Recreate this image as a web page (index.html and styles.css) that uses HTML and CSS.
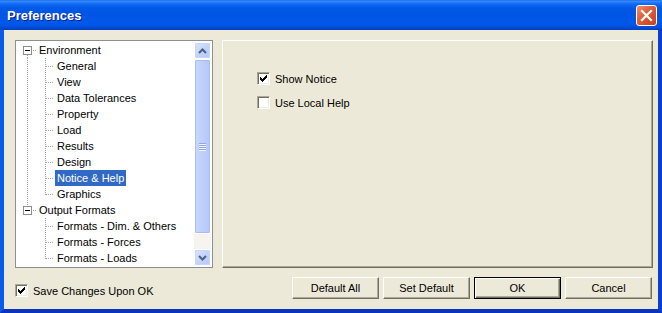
FILE: index.html
```html
<!DOCTYPE html>
<html>
<head>
<meta charset="utf-8">
<link rel="stylesheet" href="styles.css">
</head>
<body>
<div class="window">
  <div class="titlebar">
    <span class="title">Preferences</span>
    <span class="close"><svg width="13" height="13" viewBox="0 0 13 13"><path d="M2 2 L11 11 M11 2 L2 11" stroke="#fff" stroke-width="2.2" stroke-linecap="square"/></svg></span>
  </div>
  <div class="client">
    <div class="main">
      <div class="treebox">
        <div class="tree">
          <div class="row root first"><span class="exp"></span><span class="txt">Environment</span></div>
          <div class="group cont">
            <div class="row leaf"><span class="txt">General</span></div>
            <div class="row leaf"><span class="txt">View</span></div>
            <div class="row leaf"><span class="txt">Data Tolerances</span></div>
            <div class="row leaf"><span class="txt">Property</span></div>
            <div class="row leaf"><span class="txt">Load</span></div>
            <div class="row leaf"><span class="txt">Results</span></div>
            <div class="row leaf"><span class="txt">Design</span></div>
            <div class="row leaf"><span class="txt sel">Notice &amp; Help</span></div>
            <div class="row leaf last"><span class="txt">Graphics</span></div>
          </div>
          <div class="row root lastroot"><span class="exp"></span><span class="txt">Output Formats</span></div>
          <div class="group">
            <div class="row leaf"><span class="txt">Formats - Dim. &amp; Others</span></div>
            <div class="row leaf"><span class="txt">Formats - Forces</span></div>
            <div class="row leaf last"><span class="txt">Formats - Loads</span></div>
          </div>
        </div>
        <div class="scrollbar">
          <div class="sbtn"><svg width="9" height="6" viewBox="0 0 9 6"><path d="M1 5 L4.5 1.5 L8 5" fill="none" stroke="#4D6185" stroke-width="2"/></svg></div>
          <div class="thumb"><div class="grip"><i></i><i></i><i></i><i></i></div></div>
          <div class="track"></div>
          <div class="sbtn"><svg width="9" height="6" viewBox="0 0 9 6"><path d="M1 1 L4.5 4.5 L8 1" fill="none" stroke="#4D6185" stroke-width="2"/></svg></div>
        </div>
      </div>
      <div class="panel">
        <label class="check"><span class="box"><svg class="mark" width="7" height="7" viewBox="0 0 7 7" shape-rendering="crispEdges"><rect x="0" y="2" width="1" height="3"/><rect x="1" y="3" width="1" height="3"/><rect x="2" y="4" width="1" height="3"/><rect x="3" y="3" width="1" height="3"/><rect x="4" y="2" width="1" height="3"/><rect x="5" y="1" width="1" height="3"/><rect x="6" y="0" width="1" height="3"/></svg></span><span>Show Notice</span></label>
        <label class="check"><span class="box"></span><span>Use Local Help</span></label>
      </div>
    </div>
    <div class="footer">
      <label class="check save"><span class="box"><svg class="mark" width="7" height="7" viewBox="0 0 7 7" shape-rendering="crispEdges"><rect x="0" y="2" width="1" height="3"/><rect x="1" y="3" width="1" height="3"/><rect x="2" y="4" width="1" height="3"/><rect x="3" y="3" width="1" height="3"/><rect x="4" y="2" width="1" height="3"/><rect x="5" y="1" width="1" height="3"/><rect x="6" y="0" width="1" height="3"/></svg></span><span>Save Changes Upon OK</span></label>
      <div class="buttons">
        <div class="btn">Default All</div>
        <div class="btn">Set Default</div>
        <div class="btn default">OK</div>
        <div class="btn">Cancel</div>
      </div>
    </div>
  </div>
</div>
</body>
</html>
```
FILE: styles.css
```css
body {
  margin: 0;
  background: #ECE9D8;
}
.window {
  width: 662px;
  height: 313px;
  display: flex;
  flex-direction: column;
  font-family: "Liberation Sans", Arial, sans-serif;
  font-size: 11px;
  color: #000;
  overflow: hidden;
}
.titlebar {
  height: 30px;
  flex: none;
  display: flex;
  align-items: center;
  padding: 0 5px 0 7px;
  background: linear-gradient(to bottom,
    #0A5EE8 0px, #3D90FD 1px, #2C80FA 2px, #1268F2 4px, #0059E8 8px,
    #0055E3 14px, #0058EA 22px, #0054E2 26px, #0049D0 28px, #0040C0 30px);
}
.title {
  color: #fff;
  font-weight: bold;
  font-size: 13px;
  text-shadow: 1px 1px 0 #0A1E8C;
  flex: 1;
  margin-top: 1px;
}
.close {
  width: 19px;
  height: 19px;
  border: 1px solid #fff;
  border-radius: 3px;
  background: linear-gradient(135deg, #EE9073 0%, #E0603D 40%, #C8401C 100%);
  display: flex;
  align-items: center;
  justify-content: center;
  margin-top: 1px;
}
.client {
  flex: 1;
  background: #ECE9D8;
  border-left: 4px solid #0B5BEA;
  border-right: 4px solid #0A3FCC;
  border-bottom: 4px solid #0834BE;
  padding: 10px 5px 0 11px;
  display: flex;
  flex-direction: column;
}
.main {
  display: flex;
  gap: 9px;
  height: 228px;
  flex: none;
}
.treebox {
  width: 198px;
  box-sizing: border-box;
  border: 1px solid #8A8F9A;
  padding: 1px;
  background: #fff;
  display: flex;
}
.tree {
  flex: 1;
  overflow: hidden;
}
.row {
  height: 16px;
  display: flex;
  align-items: center;
  white-space: nowrap;
  background-repeat: no-repeat;
}
.txt {
  padding: 0 2px;
  line-height: 16px;
  height: 16px;
}
.txt.sel {
  background: #316AC5;
  color: #fff;
}
.root .txt {
  margin-left: 2px;
}
.exp {
  width: 7px;
  height: 7px;
  border: 1px solid #8D8D8D;
  background: #fff;
  margin-left: 6px;
  margin-right: 3px;
  display: flex;
  align-items: center;
  justify-content: center;
}
.exp::after {
  content: "";
  width: 5px;
  height: 1px;
  background: #000;
}
.root {
  background-image:
    repeating-linear-gradient(to right, #A0A0A0 0 1px, transparent 1px 2px),
    repeating-linear-gradient(to bottom, #A0A0A0 0 1px, transparent 1px 2px);
}
.root.first {
  background-size: 3px 1px, 1px 3px;
  background-position: 16px 8px, 10px 13px;
}
.root.lastroot {
  background-size: 3px 1px, 1px 4px;
  background-position: 16px 8px, 10px 0px;
}
.leaf {
  padding-left: 38px;
  background-image:
    repeating-linear-gradient(to bottom, #A0A0A0 0 1px, transparent 1px 2px),
    repeating-linear-gradient(to right, #A0A0A0 0 1px, transparent 1px 2px);
  background-size: 1px 16px, 8px 1px;
  background-position: 28px 0px, 29px 8px;
}
.leaf.last {
  background-size: 1px 9px, 8px 1px;
}
.group.cont {
  background-image: repeating-linear-gradient(to bottom, #A0A0A0 0 1px, transparent 1px 2px);
  background-size: 1px 100%;
  background-position: 10px 0;
  background-repeat: no-repeat;
}
.scrollbar {
  width: 17px;
  flex: none;
  display: flex;
  flex-direction: column;
  background: #F5F4EF;
}
.sbtn {
  height: 17px;
  box-sizing: border-box;
  border: 1px solid #fff;
  border-radius: 2px;
  background: linear-gradient(135deg, #DCE6FD 0%, #C3D4FB 50%, #B4C8F8 100%);
  box-shadow: inset 0 0 0 1px #C8D6FA;
  display: flex;
  align-items: center;
  justify-content: center;
}
.thumb {
  height: 175px;
  box-sizing: border-box;
  border: 1px solid #fff;
  border-radius: 2px;
  background: linear-gradient(to right, #C9D8FC, #BCCEFA 60%, #B2C6F7);
  box-shadow: inset 0 0 0 1px #A9BFF2;
  display: flex;
  align-items: center;
  justify-content: center;
}
.grip {
  display: flex;
  flex-direction: column;
  gap: 1px;
}
.grip i {
  display: block;
  width: 7px;
  height: 1px;
  background: #8CA8EA;
  box-shadow: 0 1px 0 #EEF3FE;
}
.track {
  flex: 1;
}
.panel {
  width: 431px;
  box-sizing: border-box;
  border: 1px solid;
  border-color: #FFFFFF #716F64 #716F64 #FFFFFF;
  box-shadow: inset -1px -1px 0 #ACA899;
  padding: 31px 0 0 34px;
  display: flex;
  flex-direction: column;
  gap: 11px;
}
.check {
  display: flex;
  align-items: center;
  gap: 5px;
  height: 13px;
  white-space: nowrap;
}
.box {
  width: 13px;
  height: 13px;
  box-sizing: border-box;
  border: 1px solid;
  border-color: #ACA899 #FFFFFF #FFFFFF #ACA899;
  box-shadow: inset 1px 1px 0 #716F64, inset -1px -1px 0 #F1EFE2;
  background: #fff;
  display: flex;
  align-items: center;
  justify-content: center;
  flex: none;
}
.mark {
  fill: #000;
}
.footer {
  flex: 1;
  display: flex;
  align-items: flex-start;
}
.save {
  margin-top: 16px;
}
.buttons {
  margin-left: auto;
  margin-right: 1px;
  margin-top: 9px;
  display: flex;
  gap: 4px;
}
.btn {
  width: 87px;
  height: 22px;
  box-sizing: border-box;
  border: 1px solid;
  border-color: #FFFFFF #716F64 #716F64 #FFFFFF;
  box-shadow: inset -1px -1px 0 #ACA899;
  background: #ECE9D8;
  display: flex;
  align-items: center;
  justify-content: center;
}
.btn.default {
  border: 1px solid #000;
  box-shadow: inset 1px 1px 0 #FFFFFF, inset -1px -1px 0 #716F64, inset -2px -2px 0 #ACA899;
}
```
